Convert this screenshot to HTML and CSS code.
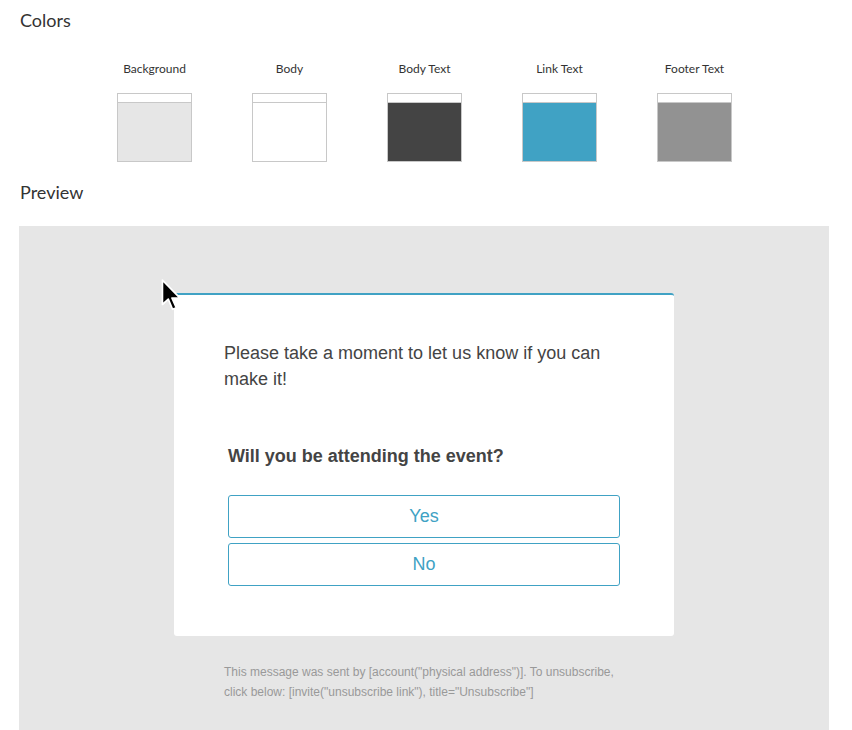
FILE: index.html
```html
<html>
    <head>
        <title>Email Theme</title>
        <link rel="stylesheet" href="styles.css">
    </head>

    <body>
        <!-- Colors -->
        <div class="section-title">Colors</div>
        <div class="swatches">
            <div class="swatch">
                <div class="swatch-label">Background</div>
                <div class="swatch-box"><div class="swatch-fill fill-bg"></div></div>
            </div>
            <div class="swatch">
                <div class="swatch-label">Body</div>
                <div class="swatch-box"><div class="swatch-fill fill-body"></div></div>
            </div>
            <div class="swatch">
                <div class="swatch-label">Body Text</div>
                <div class="swatch-box"><div class="swatch-fill fill-text"></div></div>
            </div>
            <div class="swatch">
                <div class="swatch-label">Link Text</div>
                <div class="swatch-box"><div class="swatch-fill fill-link"></div></div>
            </div>
            <div class="swatch">
                <div class="swatch-label">Footer Text</div>
                <div class="swatch-box"><div class="swatch-fill fill-footer"></div></div>
            </div>
        </div>

        <!-- Preview -->
        <div class="section-title preview-title">Preview</div>
        <div class="preview">
            <div class="card">
                <p class="intro">Please take a moment to let us know if you can make it!</p>
                <div class="question">Will you be attending the event?</div>
                <div class="answers">
                    <a class="answer" href="#">Yes</a>
                    <a class="answer" href="#">No</a>
                </div>
            </div>
            <div class="footer">
                This message was sent by [account("physical address")]. To unsubscribe,
                click below: [invite("unsubscribe link"), title="Unsubscribe"]
            </div>

            <!-- mouse pointer -->
            <svg class="cursor" width="24" height="34" viewBox="0 0 22 32">
                <path d="M2 1 L2 24 L7.5 19 L11.5 28.5 L15 27 L11 18 L18.5 18 Z" fill="#000" stroke="#fff" stroke-width="1.6" stroke-linejoin="round"/>
            </svg>
        </div>
    </body>
</html>
```

FILE: styles.css
```css
body {
    margin: 0;
    background-color: #fff;
    font-family: Lato, "Open Sans", sans-serif;
    width: 852px;
    height: 730px;
    overflow: hidden;
}

/* Section headings */
.section-title {
    font-size: 18px;
    color: #333;
    padding: 10px 0 0 20px;
    line-height: 20px;
}
.preview-title {
    padding-top: 0;
    margin-top: 20px;
}

/* Color swatches */
.swatches {
    display: flex;
    padding-left: 117px;
    gap: 60px;
    margin-top: 32px;
}
.swatch {
    width: 75px;
    display: flex;
    flex-direction: column;
    align-items: center;
}
.swatch-label {
    font-size: 12px;
    color: #333;
    line-height: 14px;
    white-space: nowrap;
}
.swatch-box {
    margin-top: 17px;
    width: 75px;
    height: 69px;
    box-sizing: border-box;
    border: 1px solid #c8c8c8;
    padding-top: 8px;
    background-color: #fff;
}
.swatch-fill {
    height: 100%;
    box-sizing: border-box;
    border-top: 1px solid #c8c8c8;
}
.fill-bg { background-color: #e6e6e6; }
.fill-body { background-color: #fff; }
.fill-text { background-color: #444; }
.fill-link { background-color: #40a2c4; }
.fill-footer { background-color: #929292; }

/* Preview area */
.preview {
    position: relative;
    margin: 24px 0 0 19px;
    width: 810px;
    height: 520px;
    background-color: #e6e6e6;
    padding-top: 67px;
    box-sizing: border-box;
    font-family: "Liberation Sans", Arial, sans-serif;
}
.card {
    width: 500px;
    margin-left: 155px;
    box-sizing: border-box;
    background-color: #fff;
    border-top: 2px solid #40a2c4;
    border-radius: 3px;
    padding: 45px 50px 50px 50px;
    color: #444;
}
.intro {
    margin: 0;
    font-size: 18px;
    line-height: 26px;
}
.question {
    margin-top: 54px;
    padding-left: 4px;
    font-size: 18px;
    font-weight: bold;
    line-height: 20px;
}
.answers {
    margin-top: 29px;
    padding-left: 4px;
    display: flex;
    flex-direction: column;
    gap: 5px;
}
.answer {
    display: block;
    width: 392px;
    height: 43px;
    box-sizing: border-box;
    border: 1px solid #40a2c4;
    border-radius: 3px;
    color: #40a2c4;
    font-size: 18px;
    line-height: 41px;
    text-align: center;
    text-decoration: none;
}
.footer {
    margin: 26px 0 0 205px;
    width: 400px;
    font-size: 12px;
    line-height: 20px;
    color: #999;
}
.cursor {
    position: absolute;
    left: 141px;
    top: 53px;
}
```
